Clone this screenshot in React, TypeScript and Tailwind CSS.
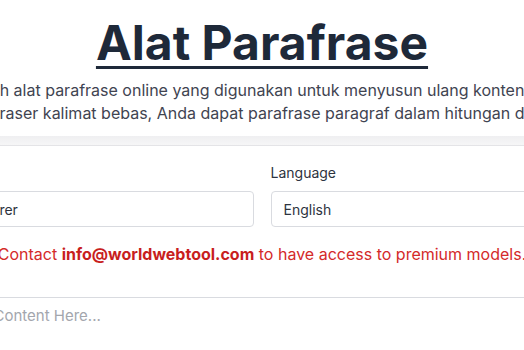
import React from "react";

export default function App() {
  return (
    <div
      className="w-[524px] h-[350px] overflow-hidden bg-white flex flex-col items-center"
      style={{ fontFamily: "Inter, 'Noto Sans', sans-serif" }}
    >
      {/* Header */}
      <div className="w-full flex flex-col items-center pt-[19px] pb-[11px]">
        <h1 className="text-[48px] leading-[48px] font-bold text-[#1e2939] underline decoration-[3px] underline-offset-[6px] whitespace-nowrap">
          Alat Parafrase
        </h1>
        <div className="mt-[12px] w-full flex flex-col items-center text-[16px] leading-[23px] text-[#3f4451]">
          <p className="whitespace-nowrap">
            h alat parafrase online yang digunakan untuk menyusun ulang konten
          </p>
          <p className="whitespace-nowrap">
            raser kalimat bebas, Anda dapat parafrase paragraf dalam hitungan d
          </p>
        </div>
      </div>
      <div className="w-full h-[10px] bg-gradient-to-b from-[#efeff1] to-[#f6f6f7] border-b border-[#e4e4e7]" />

      {/* Form */}
      <div className="w-[624px] shrink-0 pt-[17px] grid grid-cols-2 gap-[17px]">
        <div className="flex flex-col">
          <label className="text-[14px] leading-[20px] text-[#2d3340] h-[20px] mb-[8px]">Model</label>
          <div className="h-[36px] rounded-[4px] border border-[#d9dbe0] px-[12px] flex items-center text-[14px] text-[#2d3340]">
            Explorer
          </div>
        </div>
        <div className="flex flex-col">
          <label className="text-[14px] leading-[20px] text-[#2d3340] h-[20px] mb-[8px]">Language</label>
          <div className="h-[36px] rounded-[4px] border border-[#d9dbe0] px-[12px] flex items-center text-[14px] text-[#2d3340]">
            English
          </div>
        </div>
      </div>

      <p className="mt-[15px] whitespace-nowrap text-[16px] leading-[24px] text-[#d42a2a]">
        Contact <span className="font-bold text-[#c81e1e]">info@worldwebtool.com</span> to have access to premium models.
      </p>

      <div className="w-[717px] shrink-0 mt-[31px] border-t border-[#d9dbe0] px-[12px] pt-[8px]">
        <div className="text-[15px] leading-[20px] text-[#a3a6ad]">Enter Your Content Here...</div>
      </div>
    </div>
  );
}
